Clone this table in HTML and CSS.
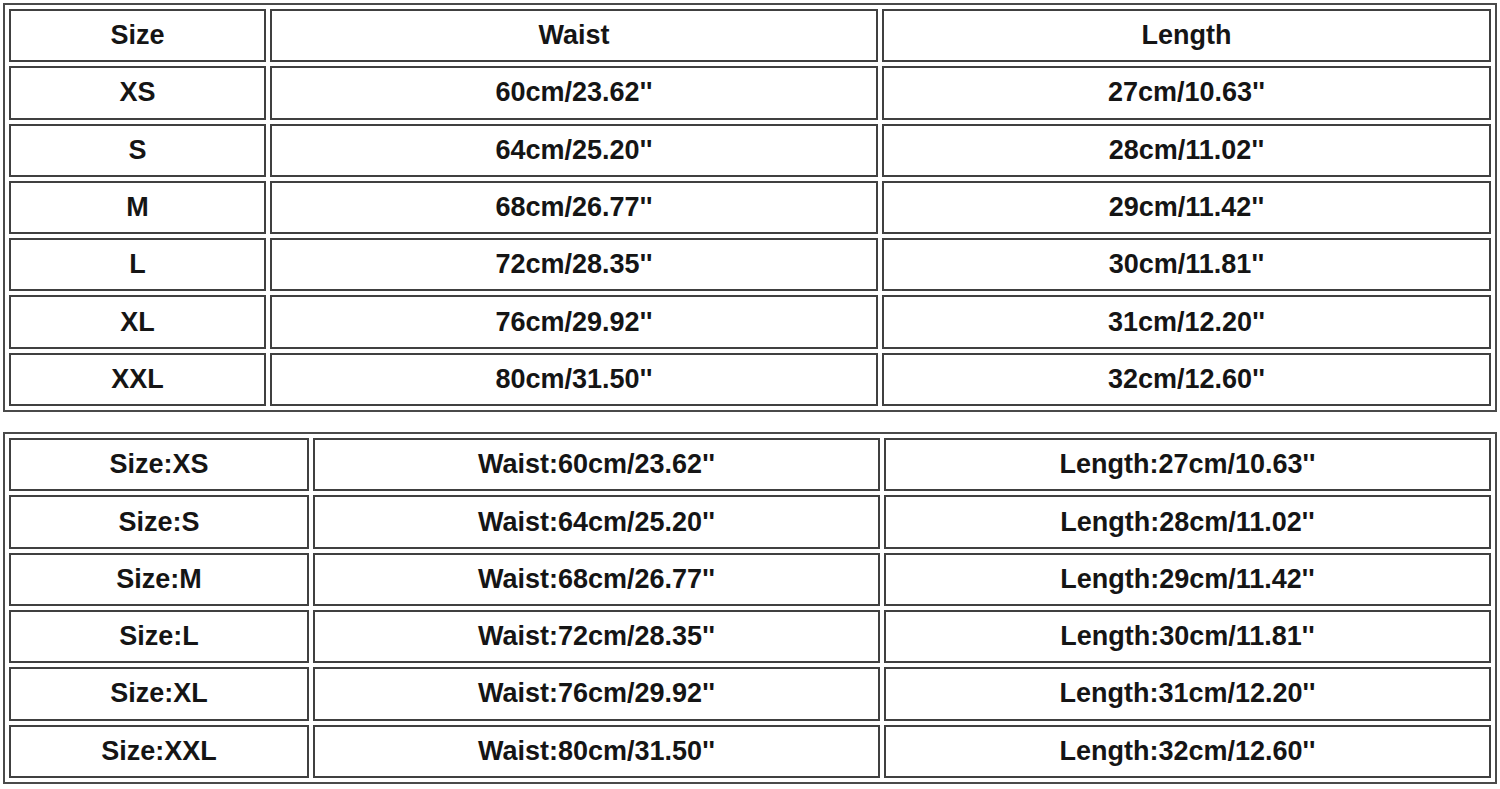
FILE: index.html
```html
<!DOCTYPE html>
<html>
<head>
<meta charset="utf-8">
<link rel="stylesheet" href="styles.css">
</head>
<body>
<div class="page">
  <table class="chart chart-a">
    <tr><td class="c1">Size</td><td class="c2">Waist</td><td>Length</td></tr>
    <tr><td class="c1">XS</td><td class="c2">60cm/23.62''</td><td>27cm/10.63''</td></tr>
    <tr><td class="c1">S</td><td class="c2">64cm/25.20''</td><td>28cm/11.02''</td></tr>
    <tr><td class="c1">M</td><td class="c2">68cm/26.77''</td><td>29cm/11.42''</td></tr>
    <tr><td class="c1">L</td><td class="c2">72cm/28.35''</td><td>30cm/11.81''</td></tr>
    <tr><td class="c1">XL</td><td class="c2">76cm/29.92''</td><td>31cm/12.20''</td></tr>
    <tr><td class="c1">XXL</td><td class="c2">80cm/31.50''</td><td>32cm/12.60''</td></tr>
  </table>
  <table class="chart chart-b">
    <tr><td class="c1">Size:XS</td><td class="c2">Waist:60cm/23.62''</td><td>Length:27cm/10.63''</td></tr>
    <tr><td class="c1">Size:S</td><td class="c2">Waist:64cm/25.20''</td><td>Length:28cm/11.02''</td></tr>
    <tr><td class="c1">Size:M</td><td class="c2">Waist:68cm/26.77''</td><td>Length:29cm/11.42''</td></tr>
    <tr><td class="c1">Size:L</td><td class="c2">Waist:72cm/28.35''</td><td>Length:30cm/11.81''</td></tr>
    <tr><td class="c1">Size:XL</td><td class="c2">Waist:76cm/29.92''</td><td>Length:31cm/12.20''</td></tr>
    <tr><td class="c1">Size:XXL</td><td class="c2">Waist:80cm/31.50''</td><td>Length:32cm/12.60''</td></tr>
  </table>
</div>
</body>
</html>
```
FILE: styles.css
```css
html, body {
  margin: 0;
  padding: 0;
  background: #ffffff;
}
.page {
  padding: 3px 0 0 3px;
}
.chart {
  width: 1494px;
  table-layout: fixed;
  border-collapse: separate;
  border-spacing: 4px;
  border: 2px solid #4a4a4a;
  font-family: "Liberation Sans", Arial, sans-serif;
  font-weight: bold;
  font-size: 27px;
  color: #151515;
}
.chart td {
  box-sizing: border-box;
  height: 53.3px;
  border: 2px solid #404040;
  text-align: center;
  vertical-align: middle;
  padding: 0;
  line-height: 1;
}
.chart-b {
  margin-top: 20px;
}
.chart-a .c1 { width: 257px; }
.chart-a .c2 { width: 608px; }
.chart-b .c1 { width: 300px; }
.chart-b .c2 { width: 567px; }
```
